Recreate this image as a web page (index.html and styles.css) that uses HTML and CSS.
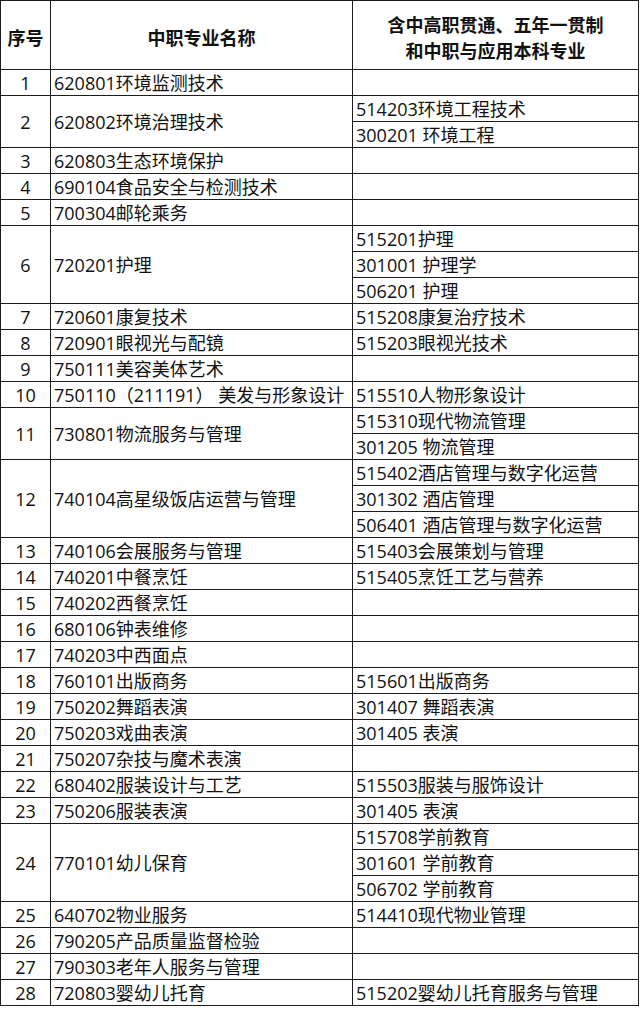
FILE: index.html
```html
<!DOCTYPE html>
<html lang="zh-CN">
<head>
<meta charset="utf-8">
<title>专业对照表</title>
<link rel="stylesheet" href="styles.css">
</head>
<body>
<table class="grid">
  <colgroup>
    <col class="c-no">
    <col class="c-name">
    <col class="c-link">
  </colgroup>
  <thead>
    <tr class="head">
      <th>序号</th>
      <th>中职专业名称</th>
      <th>含中高职贯通、五年一贯制<br>和中职与应用本科专业</th>
    </tr>
  </thead>
  <tbody>
    <tr><td class="no">1</td><td>620801环境监测技术</td><td></td></tr>
    <tr><td class="no" rowspan="2">2</td><td rowspan="2">620802环境治理技术</td><td>514203环境工程技术</td></tr>
    <tr><td>300201 环境工程</td></tr>
    <tr><td class="no">3</td><td>620803生态环境保护</td><td></td></tr>
    <tr><td class="no">4</td><td>690104食品安全与检测技术</td><td></td></tr>
    <tr><td class="no">5</td><td>700304邮轮乘务</td><td></td></tr>
    <tr><td class="no" rowspan="3">6</td><td rowspan="3">720201护理</td><td>515201护理</td></tr>
    <tr><td>301001 护理学</td></tr>
    <tr><td>506201 护理</td></tr>
    <tr><td class="no">7</td><td>720601康复技术</td><td>515208康复治疗技术</td></tr>
    <tr><td class="no">8</td><td>720901眼视光与配镜</td><td>515203眼视光技术</td></tr>
    <tr><td class="no">9</td><td>750111美容美体艺术</td><td></td></tr>
    <tr><td class="no">10</td><td class="tight">750110（211191） 美发与形象设计</td><td>515510人物形象设计</td></tr>
    <tr><td class="no" rowspan="2">11</td><td rowspan="2">730801物流服务与管理</td><td>515310现代物流管理</td></tr>
    <tr><td>301205 物流管理</td></tr>
    <tr><td class="no" rowspan="3">12</td><td rowspan="3">740104高星级饭店运营与管理</td><td>515402酒店管理与数字化运营</td></tr>
    <tr><td>301302 酒店管理</td></tr>
    <tr><td>506401 酒店管理与数字化运营</td></tr>
    <tr><td class="no">13</td><td>740106会展服务与管理</td><td>515403会展策划与管理</td></tr>
    <tr><td class="no">14</td><td>740201中餐烹饪</td><td>515405烹饪工艺与营养</td></tr>
    <tr><td class="no">15</td><td>740202西餐烹饪</td><td></td></tr>
    <tr><td class="no">16</td><td>680106钟表维修</td><td></td></tr>
    <tr><td class="no">17</td><td>740203中西面点</td><td></td></tr>
    <tr><td class="no">18</td><td>760101出版商务</td><td>515601出版商务</td></tr>
    <tr><td class="no">19</td><td>750202舞蹈表演</td><td>301407 舞蹈表演</td></tr>
    <tr><td class="no">20</td><td>750203戏曲表演</td><td>301405 表演</td></tr>
    <tr><td class="no">21</td><td>750207杂技与魔术表演</td><td></td></tr>
    <tr><td class="no">22</td><td>680402服装设计与工艺</td><td>515503服装与服饰设计</td></tr>
    <tr><td class="no">23</td><td>750206服装表演</td><td>301405 表演</td></tr>
    <tr><td class="no" rowspan="3">24</td><td rowspan="3">770101幼儿保育</td><td>515708学前教育</td></tr>
    <tr><td>301601 学前教育</td></tr>
    <tr><td>506702 学前教育</td></tr>
    <tr><td class="no">25</td><td>640702物业服务</td><td>514410现代物业管理</td></tr>
    <tr><td class="no">26</td><td>790205产品质量监督检验</td><td></td></tr>
    <tr><td class="no">27</td><td>790303老年人服务与管理</td><td></td></tr>
    <tr><td class="no">28</td><td>720803婴幼儿托育</td><td>515202婴幼儿托育服务与管理</td></tr>
  </tbody>
</table>
</body>
</html>
```

FILE: styles.css
```css
html, body {
  margin: 0;
  padding: 0;
  background: #ffffff;
}

body {
  font-family: "Open Sans", "Noto Sans CJK SC", sans-serif;
  color: #111111;
}

.grid {
  border-collapse: collapse;
  table-layout: fixed;
  width: 638px;
  font-size: 18px;
}

.c-no { width: 50px; }
.c-name { width: 302px; }
.c-link { width: 286px; }

.grid th,
.grid td {
  border: 1px solid #1c1c1c;
  padding: 0 0 0 3px;
  line-height: 24px;
  white-space: nowrap;
  overflow: hidden;
  vertical-align: middle;
  text-align: left;
}

.grid tbody tr {
  height: 26px;
}

.grid .head {
  height: 69px;
}

.grid th {
  font-family: "Noto Sans CJK SC", sans-serif;
  font-weight: 700;
  text-align: center;
  padding: 3px 0 0 0;
  line-height: 26px;
}

.grid td.no {
  text-align: center;
  padding: 0;
}
```
